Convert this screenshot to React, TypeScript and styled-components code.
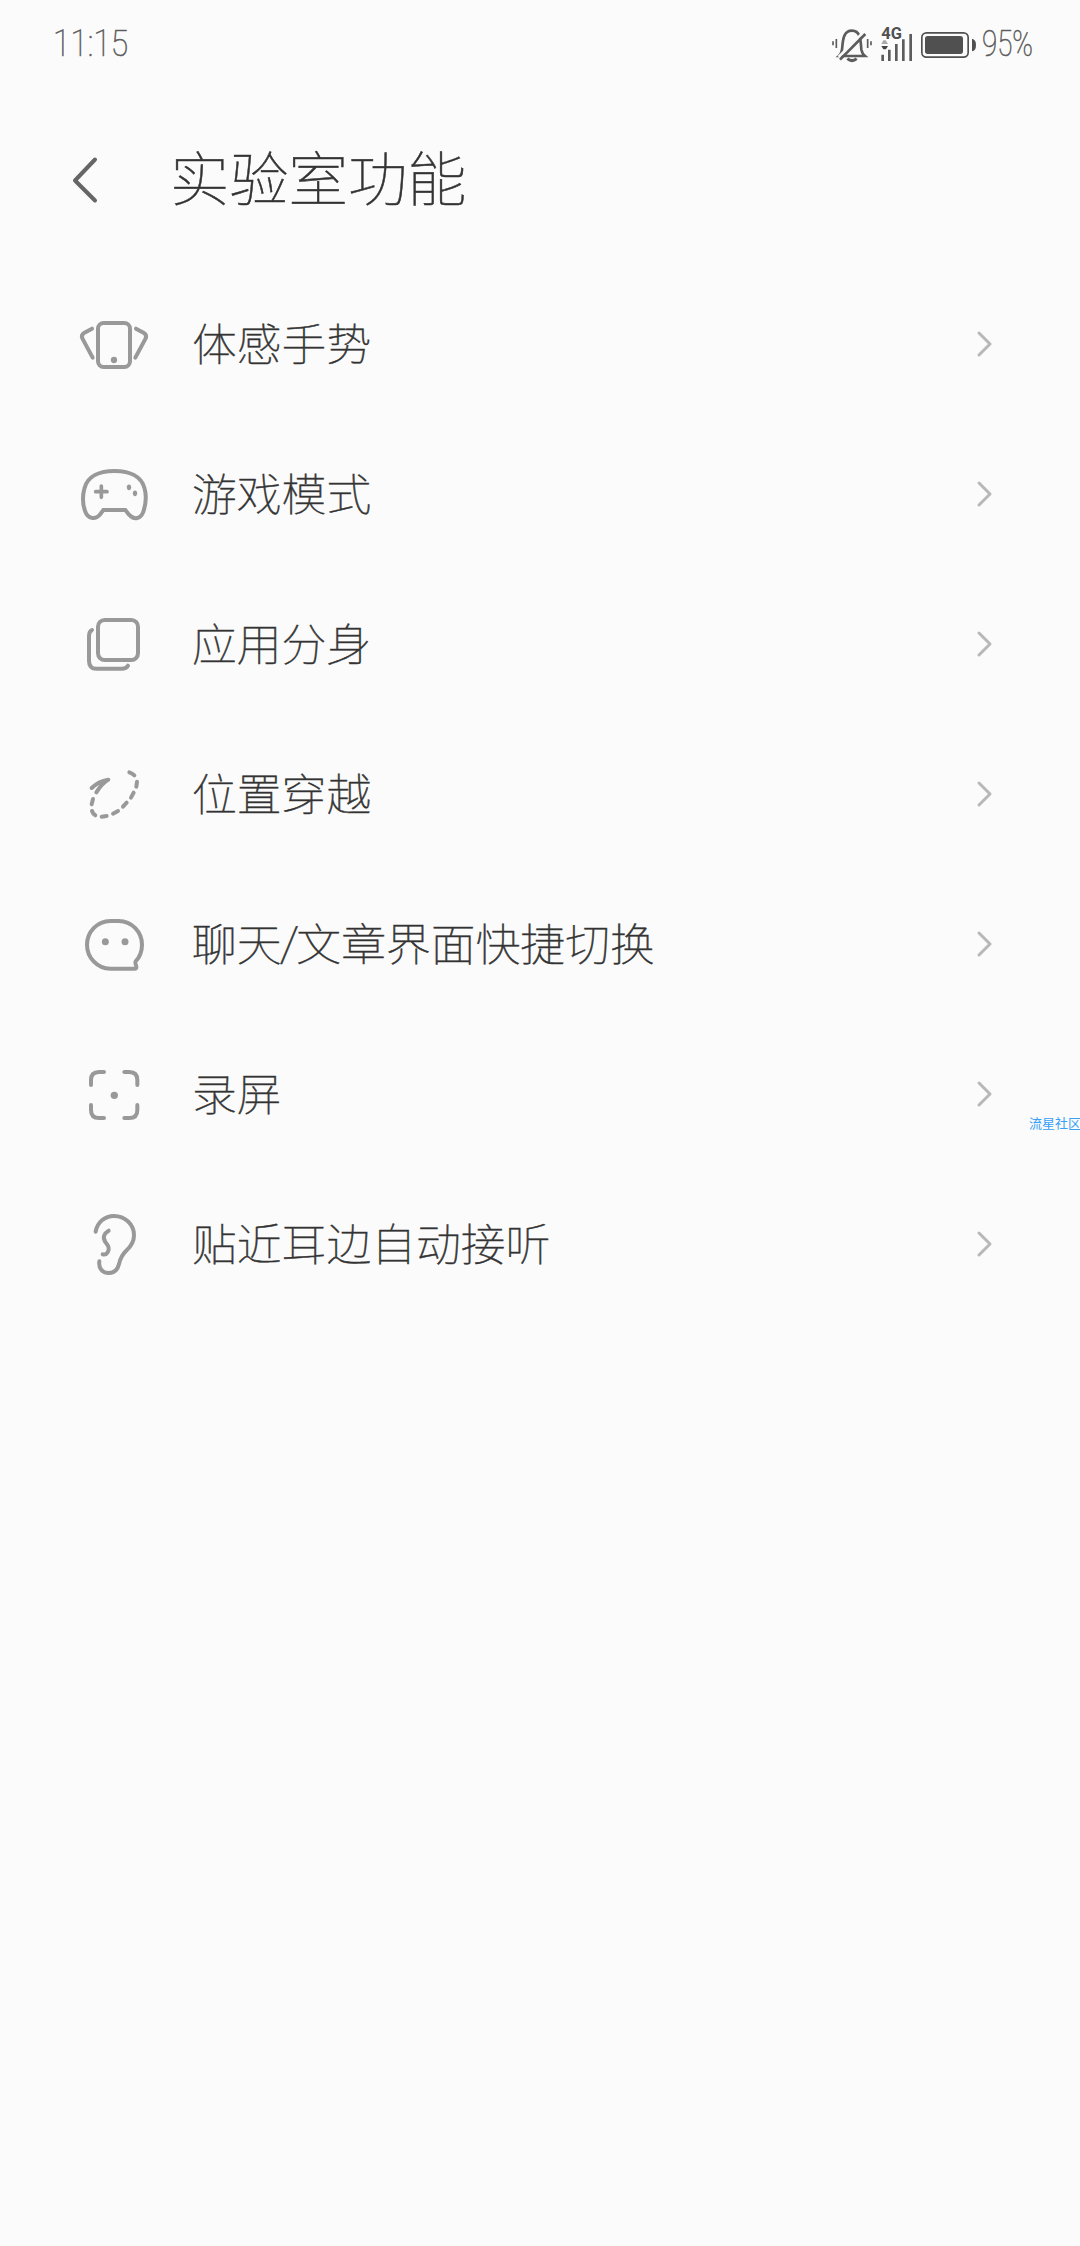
import React from "react";
import styled, { createGlobalStyle } from "styled-components";

const GlobalStyle = createGlobalStyle`
  html, body { margin: 0; background: #fbfbfb; }
  body { font-family: Roboto, "Noto Sans CJK SC", sans-serif; }
`;

const Screen = styled.div`
  position: relative;
  box-sizing: border-box;
  width: 1080px;
  height: 2246px;
  overflow: hidden;
  background: #fbfbfb;
`;

const StatusBar = styled.header`
  box-sizing: border-box;
  display: flex;
  justify-content: space-between;
  align-items: center;
  height: 88px;
  padding: 0 48px 0 53px;
`;

const StatusText = styled.span<{ $width: number; $scale: number }>`
  display: block;
  width: ${(p) => p.$width}px;
  font-size: 36.5px;
  font-weight: 100;
  line-height: 88px;
  color: #5c5c5c;
  -webkit-text-stroke: 0.6px #5c5c5c;
  white-space: nowrap;
  transform: scaleX(${(p) => p.$scale});
  transform-origin: left center;
`;

const StatusGroup = styled.div`
  display: flex;
  align-items: center;
`;

const StatusIcons = styled.svg`
  display: block;
  width: 152px;
  height: 70px;
  margin-right: 2px;
`;

const TitleBar = styled.div`
  display: flex;
  align-items: center;
  height: 181px;
  padding-left: 64px;
`;

const BackIcon = styled.svg`
  width: 44px;
  height: 60px;
  margin-right: 62px;
`;

const Title = styled.h1`
  margin: 0;
  padding-bottom: 7px;
  font: 100 59.3px/88px "Noto Sans CJK SC", sans-serif;
  color: #333;
  -webkit-text-stroke: 0.5px #333;
`;

const List = styled.ul`
  margin: 0;
  padding: 0;
  list-style: none;
`;

const Row = styled.li`
  display: flex;
  align-items: center;
  height: 150px;
  padding: 0 86px 0 74px;
`;

const RowIcon = styled.svg`
  flex: none;
  width: 80px;
  height: 80px;
  margin-right: 38px;
  fill: none;
  stroke: #999;
  stroke-width: 12;
  stroke-linecap: round;
  stroke-linejoin: round;
`;

const Label = styled.span`
  flex: 1;
  padding-bottom: 4px;
  font: 100 44.8px/66px "Noto Sans CJK SC", sans-serif;
  color: #333;
  -webkit-text-stroke: 0.5px #333;
  white-space: nowrap;
`;

const Slash = styled.span`
  display: inline-block;
  margin: 0 -1.5px;
  transform: translateY(-2px) scaleY(0.88);
`;

const Chevron = styled.svg`
  width: 20px;
  height: 30px;
`;

const Watermark = styled.span`
  position: absolute;
  left: 1029px;
  top: 1114px;
  font: 400 13px/18px "Noto Sans CJK SC", sans-serif;
  color: #35a0f5;
  white-space: nowrap;
`;

const GestureIcon = () => (
  <>
    <rect x="114" y="69" width="96" height="132" rx="17" />
    <circle cx="162" cy="180" r="9.500" fill="#999" stroke="none" />
    <path d="M96 86 L72 99 Q63 104 67 115 L98 173" />
    <path d="M228 86 L252 99 Q261 104 257 115 L226 173" />
  </>
);

const GamepadIcon = () => (
  <>
    <path strokeLinejoin="miter" d="M130 180 H196 L207 194 C223 212 243 206 250 185 C257 164 260 139 254 116 C245 78 207 63 163 63 C120 63 82 78 73 116 C67 139 68 164 76 185 C84 206 105 210 119 195 Z" />
    <path strokeWidth="11" d="M107 125 H141 M124 108 V142" />
    <ellipse cx="207" cy="112" rx="6.500" ry="8.500" fill="#999" stroke="none" />
    <ellipse cx="225" cy="130" rx="6.500" ry="8.500" fill="#999" stroke="none" />
  </>
);

const CloneIcon = () => (
  <>
    <rect x="114" y="60" width="120" height="120" rx="20" />
    <path d="M96 90 Q87 95 87 108 V182 Q87 206 109 206 H185 Q199 206 204 197" />
  </>
);

const TravelIcon = () => (
  <>
    <path d="M95 114 C109 100 127 92 145 89 C132 97 119 111 109 127" />
    <path d="M99 147 L95 163 M96 183 Q99 192 106 196 M125 200 L140 198 M159 191 L174 183 M189 170 L200 158 M213 143 L221 128 M229 110 L231 95 M223 76 Q217 70 208 67" />
  </>
);

const ChatIcon = () => (
  <>
    <path d="M151 63 H176 C216 63 246 97 246 134 C246 154 239 171 227 184 C223 189 228 193 229 200 Q230 206 224 206 H151 C111 206 81 172 81 134 C81 97 111 63 151 63 Z" />
    <circle cx="136" cy="125" r="10.500" fill="#999" stroke="none" />
    <circle cx="195" cy="125" r="10.500" fill="#999" stroke="none" />
  </>
);

const RecordIcon = () => (
  <>
    <path d="M93 105 V90 Q93 66 117 66 H132 M193 66 H208 Q232 66 232 90 V105 M232 165 V180 Q232 204 208 204 H193 M132 204 H117 Q93 204 93 180 V165" />
    <circle cx="163" cy="136" r="11" fill="#999" stroke="none" />
  </>
);

const EarIcon = () => (
  <g transform="translate(0 -15)">
    <path d="M107 110 C112 82 134 63 162 63 C195 63 222 88 222 121 C222 141 213 154 200 166 C187 178 181 190 177 207 C173 224 163 234 146 234 C127 234 115 219 118 199" />
    <path d="M146 107 C132 115 127 128 136 141 C145 152 150 160 143 172 C139 178 134 180 128 178" />
  </g>
);

const items: { label: React.ReactNode; Icon: React.FC }[] = [
  { label: "体感手势", Icon: GestureIcon },
  { label: "游戏模式", Icon: GamepadIcon },
  { label: "应用分身", Icon: CloneIcon },
  { label: "位置穿越", Icon: TravelIcon },
  { label: <>聊天<Slash>/</Slash>文章界面快捷切换</>, Icon: ChatIcon },
  { label: "录屏", Icon: RecordIcon },
  { label: "贴近耳边自动接听", Icon: EarIcon },
];

const NetworkLabel = styled.text`
  font: 700 47px Roboto, sans-serif;
  fill: #505050;
`;

export default function App() {
  return (
    <Screen>
      <GlobalStyle />
      <StatusBar>
        <StatusText $width={80} $scale={0.87}>11:15</StatusText>
        <StatusGroup>
          <StatusIcons viewBox="24 -3 456 210" fill="none" stroke="#5c5c5c">
            <path strokeWidth="8" d="M57 138 H135 Q126 130 124 119 C122 86 120 62 96 62 C72 62 69 86 67 109 Q66 130 57 138 Z" />
            <path strokeWidth="5" d="M39 94 V106 M49 87 V114 M143 87 V114 M153 94 V106" />
            <path strokeWidth="9" d="M82 146 Q96 158 110 146" />
            <path stroke="#fbfbfb" strokeWidth="8" d="M56 141 L132 65" />
            <path strokeWidth="8" d="M60 149 L136 72" />
            <NetworkLabel x="184" y="87" stroke="none" textLength="62" lengthAdjust="spacingAndGlyphs">4G</NetworkLabel>
            <path fill="#aaa" stroke="none" d="M184 102 L190 91 H197 L204 102 Z" />
            <path fill="#444" stroke="none" d="M184 108 H204 L198 118 H190 Z" />
            <path strokeWidth="8" d="M188 134 V153 M208 119 V153 M229 102 V153 M250 88 V153 M272 72 V153" />
            <rect x="305.500" y="68.500" width="139" height="73" rx="14" stroke="#505050" strokeWidth="5" />
            <rect x="315" y="78" width="114" height="54" rx="8" fill="#505050" stroke="none" />
            <path fill="#505050" stroke="none" d="M456 86 Q468 88 468 105 Q468 122 456 124 Z" />
          </StatusIcons>
          <StatusText $width={50} $scale={0.76}>95%</StatusText>
        </StatusGroup>
      </StatusBar>
      <TitleBar>
        <BackIcon viewBox="0 0 44 60" fill="none" stroke="#666" strokeWidth="4" strokeLinecap="round" strokeLinejoin="round">
          <path d="M31 10.500 L11 31.500 L31 51.500" />
        </BackIcon>
        <Title>实验室功能</Title>
      </TitleBar>
      <List>
        {items.map(({ label, Icon }, i) => (
          <Row key={i}>
            <RowIcon viewBox="42 12 240 240"><Icon /></RowIcon>
            <Label>{label}</Label>
            <Chevron viewBox="0 0 20 30" fill="none" stroke="#b8b8b8" strokeWidth="3" strokeLinecap="round" strokeLinejoin="round">
              <path d="M5 4 L16 15 L5 26" />
            </Chevron>
          </Row>
        ))}
      </List>
      <Watermark>流星社区</Watermark>
    </Screen>
  );
}
